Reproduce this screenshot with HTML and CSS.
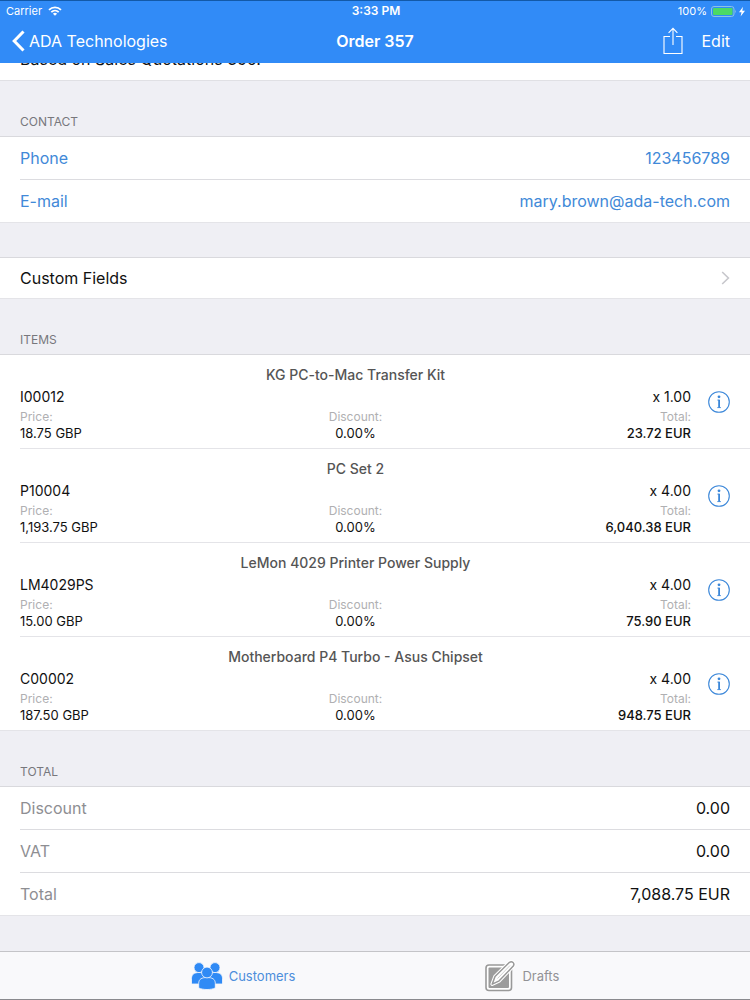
FILE: index.html
```html
<!DOCTYPE html>
<html lang="en">
<head>
  <meta charset="UTF-8">
  <meta name="viewport" content="width=device-width, initial-scale=1">
  <title>Order 357</title>
  <link rel="stylesheet" href="styles.css">
</head>
<body>

  <!-- Header -->
  <header>
    <div class="status-bar">
      <div class="carrier">
        <span>Carrier</span>
        <svg width="14" height="10" viewBox="0 0 14 10" fill="none" stroke="#fff" stroke-width="1.8">
          <path d="M1 3.8a8.6 8.6 0 0 1 12 0"/>
          <path d="M3.3 6.2a5.3 5.3 0 0 1 7.4 0"/>
          <path d="M7 9.8 4.9 7.7a3 3 0 0 1 4.2 0z" fill="#fff" stroke="none"/>
        </svg>
      </div>
      <time>3:33 PM</time>
      <div class="battery">
        <span>100%</span>
        <svg width="35" height="11" viewBox="0 0 35 11">
          <rect x="0.5" y="0.5" width="22.5" height="10" rx="2.5" fill="none" stroke="#8cc4e4"/>
          <rect x="2" y="2" width="19.5" height="7" rx="1" fill="#4cd964"/>
          <path d="M24 3.8q1.6 1.7 0 3.4z" fill="#8cc4e4"/>
          <path d="M32 .8 28 6.200h2.500L29.600 10.500 34 4.800h-2.700z" fill="#fff"/>
        </svg>
      </div>
    </div>
    <nav class="nav-bar">
      <a class="back" href="#">
        <svg width="13" height="22" viewBox="0 0 13 22" fill="none" stroke="#fff" stroke-width="3">
          <path d="M11.5 1.5 2.2 11l9.3 9.5"/>
        </svg>
        ADA Technologies
      </a>
      <h1>Order 357</h1>
      <div class="actions">
        <button type="button" aria-label="Share">
          <svg width="20" height="28" viewBox="0 0 20 28" fill="none" stroke="#fff" stroke-width="1.1">
            <path d="M7 9.5H1v17h18v-17h-6"/>
            <path d="M10 18V1.5M5.6 5.8 10 1.4l4.4 4.4"/>
          </svg>
        </button>
        <button type="button">Edit</button>
      </div>
    </nav>
  </header>

  <main>
    <p class="remarks">Based on Sales Quotations 356.</p>

    <h2>Contact</h2>
    <dl class="group contact">
      <div class="row"><dt>Phone</dt><dd><a href="tel:123456789">123456789</a></dd></div>
      <div class="row"><dt>E-mail</dt><dd><a href="mailto:mary.brown@ada-tech.com">mary.brown@ada-tech.com</a></dd></div>
    </dl>

    <div class="group custom">
      <a class="row" href="#">
        Custom Fields
        <svg width="9" height="14" viewBox="0 0 9 14" fill="none" stroke="#c7c7cc" stroke-width="1.6">
          <path d="M1.2 1 7.4 7l-6.2 6"/>
        </svg>
      </a>
    </div>

    <h2>Items</h2>
    <ul class="group items" id="items"></ul>

    <h2>Total</h2>
    <dl class="group totals">
      <div class="row"><dt>Discount</dt><dd>0.00</dd></div>
      <div class="row"><dt>VAT</dt><dd>0.00</dd></div>
      <div class="row"><dt>Total</dt><dd>7,088.75 EUR</dd></div>
    </dl>
  </main>

  <!-- Tab bar -->
  <footer>
    <a class="active" href="#">
      <svg width="32" height="28" viewBox="0 0 32 28" fill="#2f8af5" stroke="#f9f9fb" stroke-width="0.8">
        <circle cx="8" cy="5.6" r="5"/>
        <circle cx="24" cy="5.6" r="5"/>
        <path d="M.5 22v-5.500c0-4 2.500-6 7.500-6s7.500 2 7.500 6V22z"/>
        <path d="M16.500 22v-5.500c0-4 2.500-6 7.500-6s7.500 2 7.500 6V22z"/>
        <path d="M7.700 26v-4.500c0-4.500 3-6 8.300-6s8.300 1.500 8.300 6V26c-4.500 2-12 2-16.600 0z"/>
        <circle cx="16" cy="10.500" r="5.400"/>
      </svg>
      Customers
    </a>
    <a href="#">
      <svg width="31" height="32" viewBox="0 0 31 32">
        <rect x="1" y="5" width="25.500" height="25.500" rx="3" fill="#fff" stroke="#999" stroke-width="1.600"/>
        <rect x="3.500" y="7.500" width="20.500" height="20.500" rx="1" fill="#9c9c9c"/>
        <path d="M7.200 24.200 10 16.500 24.500 2.300c2.500-1.800 5.600 1 3.800 3.700L14.200 20.800z" fill="#fff" stroke="#fff" stroke-width="3.600" stroke-linejoin="round"/>
        <path d="M7.200 24.200 10 16.500 24.500 2.300c2.500-1.800 5.600 1 3.800 3.700L14.200 20.800z" fill="#fff" stroke="#999" stroke-width="1.500" stroke-linejoin="round"/>
        <path d="M12.500 18.500 25 5.500" fill="none" stroke="#c4c4c4" stroke-width="0.800"/>
      </svg>
      Drafts
    </a>
  </footer>

  <script>
    const items = [
      { name: 'KG PC-to-Mac Transfer Kit', code: 'I00012', qty: '1.00', price: '18.75 GBP', discount: '0.00%', total: '23.72 EUR' },
      { name: 'PC Set 2', code: 'P10004', qty: '4.00', price: '1,193.75 GBP', discount: '0.00%', total: '6,040.38 EUR' },
      { name: 'LeMon 4029 Printer Power Supply', code: 'LM4029PS', qty: '4.00', price: '15.00 GBP', discount: '0.00%', total: '75.90 EUR' },
      { name: 'Motherboard P4 Turbo - Asus Chipset', code: 'C00002', qty: '4.00', price: '187.50 GBP', discount: '0.00%', total: '948.75 EUR' }
    ];

    document.getElementById('items').innerHTML = items.map(item => `
      <li class="item">
        <div class="item-body">
          <h3>${item.name}</h3>
          <div class="item-code"><span>${item.code}</span><span>x ${item.qty}</span></div>
          <dl class="item-values">
            <div><dt>Price:</dt><dd>${item.price}</dd></div>
            <div><dt>Discount:</dt><dd>${item.discount}</dd></div>
            <div><dt>Total:</dt><dd class="sum">${item.total}</dd></div>
          </dl>
        </div>
        <button type="button" aria-label="Details of ${item.code}">
          <svg width="22" height="22" viewBox="0 0 22 22" fill="none" stroke="#3b87d9">
            <circle cx="11" cy="11" r="10.300" stroke-width="1.100"/>
            <circle cx="11" cy="5.800" r="1.400" fill="#3b87d9" stroke="none"/>
            <path d="M11.100 8.800v8" stroke-width="1.800"/>
            <path d="M9.300 9.100h2M9.200 16.600h3.800" stroke-width="0.800"/>
          </svg>
        </button>
      </li>
    `).join('');
  </script>

</body>
</html>
```
FILE: styles.css
```css
* {
  box-sizing: border-box;
}

body {
  margin: 0;
  font-family: Inter, "Liberation Sans", sans-serif;
  font-size: 16px;
  line-height: 20px;
  background-color: #efeff4;
  color: #111;
  display: flex;
  flex-direction: column;
  min-height: 100vh;
}

h1, h2, h3, p, dl, dd, ul {
  margin: 0;
  padding: 0;
}

a {
  color: inherit;
  text-decoration: none;
}

button {
  padding: 0;
  border: none;
  background: none;
  color: inherit;
  font: inherit;
  cursor: pointer;
}

svg {
  display: block;
  flex: none;
}

header {
  position: sticky;
  top: 0;
  z-index: 1;
  background-color: #318bf7;
  border-top: 1px solid #1259a8;
  color: #fff;
}

.status-bar,
.nav-bar {
  display: grid;
  grid-template-columns: 1fr auto 1fr;
  align-items: center;
}

.status-bar {
  height: 18px;
  padding: 0 4px 0 6px;
  font-size: 11px;
}

.status-bar time {
  font-size: 12px;
  font-weight: 600;
}

.carrier,
.battery {
  display: flex;
  align-items: center;
  gap: 6px;
}

.battery {
  justify-content: flex-end;
  gap: 4px;
}

.nav-bar {
  height: 44px;
  padding: 0 12px;
}

.nav-bar h1 {
  font-size: 16px;
  font-weight: 600;
}

.back {
  display: flex;
  align-items: center;
  gap: 4px;
}

.actions {
  display: flex;
  align-items: center;
  justify-content: flex-end;
  gap: 18px;
  padding-right: 8px;
}

main {
  flex: 1;
  padding-bottom: 35px;
}

/* scrolled partly under the header */
.remarks {
  margin-top: -14px;
  padding: 0 20px 11px;
  background-color: #fff;
  border-bottom: 1px solid #e0e0e4;
}

h2 {
  padding: 31px 20px 4px;
  font-size: 12px;
  font-weight: 400;
  text-transform: uppercase;
  color: #77777c;
}

.group {
  background-color: #fff;
  border-top: 1px solid #d9d9dd;
  border-bottom: 1px solid #e4e4e8;
  list-style: none;
}

.row {
  display: flex;
  align-items: center;
  justify-content: space-between;
  height: 42px;
  padding-right: 20px;
  margin-left: 20px;
}

.row + .row {
  height: 43px;
  border-top: 1px solid #dcdce0;
}

.contact {
  color: #4189d8;
}

.custom {
  margin-top: 34px;
}

.custom .row {
  height: 40px;
}

.item {
  display: flex;
  align-items: center;
  gap: 17px;
  margin-left: 20px;
  padding-right: 20px;
}

.item + .item {
  border-top: 1px solid #e4e4e8;
}

.item-body {
  flex: 1;
  padding: 10px 0 7px;
}

.item h3 {
  font-size: 14px;
  font-weight: 500;
  text-align: center;
  color: #555;
}

.item-code {
  display: flex;
  justify-content: space-between;
  font-size: 14px;
  line-height: 24px;
}

.item-values {
  display: grid;
  grid-template-columns: 1fr 1fr 1fr;
  font-size: 12px;
  line-height: 16px;
  text-align: center;
}

.item-values div:first-child {
  text-align: left;
}

.item-values div:last-child {
  text-align: right;
}

.item-values dt {
  color: #b0b0b2;
}

.item-values dd {
  font-size: 13px;
}

.item-values .sum {
  font-weight: 500;
}

.totals dt {
  color: #8e8e92;
}

footer {
  position: sticky;
  bottom: 0;
  display: flex;
  justify-content: center;
  gap: 190px;
  height: 49px;
  background-color: #f9f9fb;
  border-top: 1px solid #c4c4c8;
  border-bottom: 1px solid #8a8a8e;
  font-size: 13px;
  color: #929296;
}

footer a {
  display: flex;
  align-items: center;
  gap: 6px;
}

footer .active {
  color: #4c8edb;
}
```
